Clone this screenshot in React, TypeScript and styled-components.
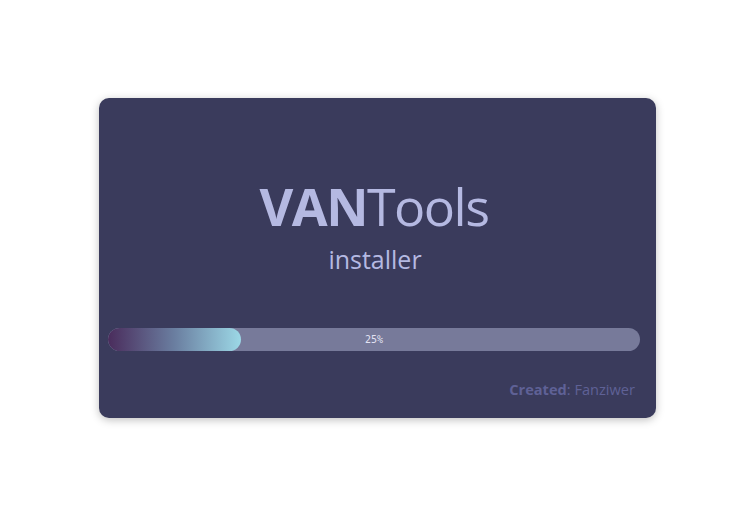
import React from "react";
import styled, { createGlobalStyle } from "styled-components";

const Global = createGlobalStyle`
  html, body { margin: 0; padding: 0; background: #ffffff; }
  body { font-family: "Open Sans", "Noto Sans", sans-serif; }
`;

const Page = styled.div`
  min-height: 513px;
  box-sizing: border-box;
  display: flex;
  align-items: center;
  justify-content: center;
  padding: 3px 0 0 15px;
`;

const Card = styled.div`
  width: 557px;
  height: 320px;
  box-sizing: border-box;
  background: #3a3b5c;
  border-radius: 10px;
  box-shadow: 0 2px 8px rgba(0, 0, 0, 0.25);
  display: flex;
  flex-direction: column;
  padding: 74px 16px 0 9px;
`;

const Title = styled.h1`
  margin: 0;
  text-align: center;
  font-family: "Open Sans", sans-serif;
  font-size: 52px;
  line-height: 68px;
  font-weight: 400;
  color: #b5b9e2;
  letter-spacing: -1.5px;
`;

const Bold = styled.span`
  font-weight: 700;
`;

const Subtitle = styled.div`
  text-align: center;
  font-family: "Open Sans", sans-serif;
  font-size: 25px;
  line-height: 32px;
  margin-top: 3px;
  color: #b5b9e2;
  padding-left: 2px;
`;

const Track = styled.div`
  position: relative;
  margin-top: 53px;
  height: 23px;
  border-radius: 12px;
  background: #777a9a;
  overflow: hidden;
`;

const Fill = styled.div`
  height: 100%;
  border-radius: 12px;
  background: linear-gradient(90deg, #4a2c5c 0%, #6a7ea0 50%, #9cd8e6 100%);
`;

const Percent = styled.span`
  position: absolute;
  inset: 0;
  display: flex;
  align-items: center;
  justify-content: center;
  font-family: "DejaVu Sans Mono", monospace;
  font-size: 10px;
  color: #e2e2f2;
`;

const Footer = styled.div`
  margin-top: 28px;
  text-align: right;
  padding-right: 5px;
  font-family: "Open Sans", sans-serif;
  font-size: 14.6px;
  color: #5f6196;
`;

export default function App() {
  const progress = 25;
  return (
    <>
      <Global />
      <Page>
        <Card>
          <Title>
            <Bold>VAN</Bold>Tools
          </Title>
          <Subtitle>installer</Subtitle>
          <Track>
            <Fill style={{ width: `${progress}%` }} />
            <Percent>{progress}%</Percent>
          </Track>
          <Footer>
            <Bold>Created</Bold>: Fanziwer
          </Footer>
        </Card>
      </Page>
    </>
  );
}
